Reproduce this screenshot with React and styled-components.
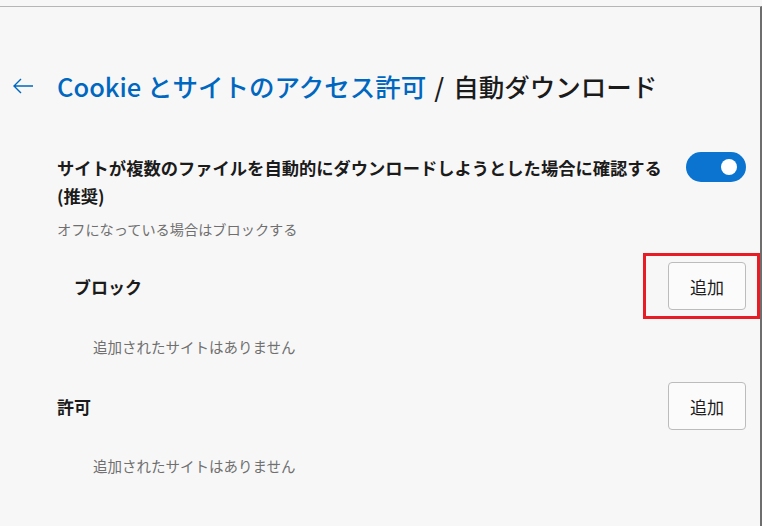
import React from 'react'
import styled, { createGlobalStyle } from 'styled-components'

const Global = createGlobalStyle`
  html, body {
    margin: 0;
    padding: 0;
    background: #f7f7f7;
  }
  body {
    font-family: "Noto Sans CJK JP", "Noto Sans", sans-serif;
    color: #1b1b1b;
  }
`

export default function App() {
  return (
    <>
      <Global />
      <Frame>
        <Header>
          <BackButton aria-label="戻る">
            <svg width="22" height="16" viewBox="0 0 22 16" fill="none">
              <path d="M21 8H2M9 1L2 8l7 7" stroke="#0067c0" strokeWidth="1.4" />
            </svg>
          </BackButton>
          <Title>
            <Crumb>Cookie とサイトのアクセス許可</Crumb>
            <Slash>/</Slash>
            自動ダウンロード
          </Title>
        </Header>

        <SettingRow>
          <SettingText>
            <Label>サイトが複数のファイルを自動的にダウンロードしようとした場合に確認する (推奨)</Label>
            <Hint>オフになっている場合はブロックする</Hint>
          </SettingText>
          <Toggle $on />
        </SettingRow>

        <ListHeader $indent={74} $top={23}>
          <ListTitle>ブロック</ListTitle>
          <Highlight>
            <AddButton>追加</AddButton>
          </Highlight>
        </ListHeader>
        <Empty $top={27}>追加されたサイトはありません</Empty>

        <ListHeader $indent={57} $top={25}>
          <ListTitle>許可</ListTitle>
          <AddButton>追加</AddButton>
        </ListHeader>
        <Empty $top={26}>追加されたサイトはありません</Empty>
      </Frame>
    </>
  )
}

const Frame = styled.div`
  margin-top: 6px;
  height: 520px;
  box-sizing: border-box;
  border-top: 1px solid #b6b6b6;
  border-right: 2px solid #6e6e6e;
  overflow: hidden;
`

const Header = styled.div`
  display: flex;
  align-items: center;
  height: 40px;
  margin-top: 59px;
  padding-left: 12px;
`

const BackButton = styled.div`
  width: 22px;
  height: 16px;
  margin-right: 23px;
  display: flex;
`

const Title = styled.h1`
  margin: 0;
  font-size: 25.5px;
  font-weight: 500;
  line-height: 40px;
  white-space: nowrap;
  color: #1b1b1b;
`

const Crumb = styled.span`
  color: #0067c0;
`

const Slash = styled.span`
  margin: 0 9px 0 8px;
`

const SettingRow = styled.div`
  display: flex;
  align-items: flex-start;
  gap: 12px;
  margin-top: 48px;
  padding: 0 14px 0 57px;
`

const SettingText = styled.div`
  flex: 1;
`

const Label = styled.div`
  font-size: 17.3px;
  font-weight: 700;
  line-height: 28px;
`

const Hint = styled.div`
  margin-top: 9px;
  font-size: 14.2px;
  line-height: 20px;
  color: #6f6f6f;
`

const Toggle = styled.div`
  position: relative;
  flex: none;
  width: 60px;
  height: 30px;
  margin-top: -2px;
  border-radius: 15px;
  background: ${p => (p.$on ? '#0a74d0' : '#fff')};

  &::after {
    content: '';
    position: absolute;
    top: 7px;
    right: 9px;
    width: 16px;
    height: 16px;
    border-radius: 50%;
    background: #fff;
  }
`

const ListHeader = styled.div`
  display: flex;
  align-items: center;
  justify-content: space-between;
  height: 48px;
  margin-top: ${p => p.$top}px;
  padding: 0 14px 0 ${p => p.$indent}px;
`

const ListTitle = styled.div`
  font-size: 17px;
  font-weight: 700;
`

const Highlight = styled.div`
  position: relative;

  &::before {
    content: '';
    position: absolute;
    left: -25px;
    top: -9px;
    right: -14px;
    bottom: -9px;
    border: 3px solid #e81c24;
    pointer-events: none;
  }
`

const AddButton = styled.button`
  display: block;
  width: 78px;
  height: 48px;
  box-sizing: border-box;
  border: 1px solid #bcbcbc;
  border-radius: 4px;
  background: #fbfbfb;
  font-family: inherit;
  font-size: 17px;
  color: #1b1b1b;
`

const Empty = styled.div`
  margin-top: ${p => p.$top}px;
  padding-left: 93px;
  font-size: 14.5px;
  line-height: 20px;
  color: #6f6f6f;
`
